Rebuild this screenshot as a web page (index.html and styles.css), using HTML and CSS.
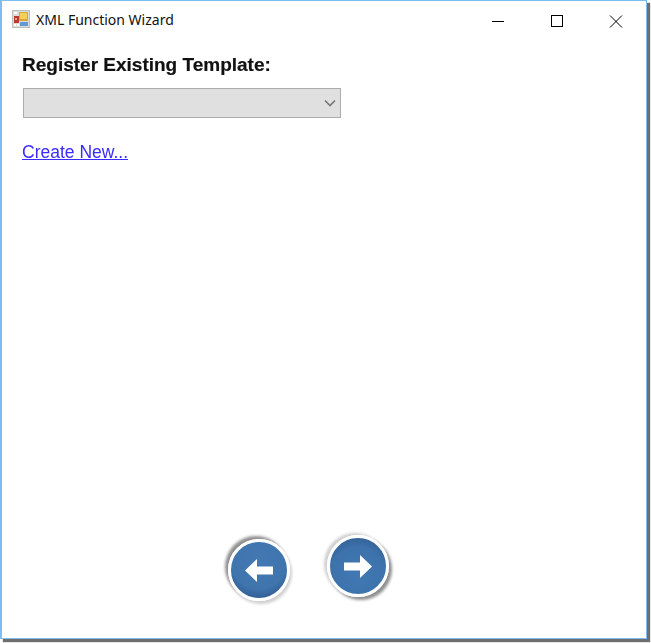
FILE: index.html
```html
<!DOCTYPE html>
<html lang="en">
<head>
<meta charset="utf-8">
<title>XML Function Wizard</title>
<link rel="stylesheet" href="styles.css">
</head>
<body>
<div class="window">
  <header class="titlebar">
    <svg class="app-icon" width="18" height="18" viewBox="0 0 18 18">
      <rect x="0" y="0" width="18" height="18" fill="#bdbdbd"/>
      <rect x="1" y="1" width="16" height="16" fill="#dcdcdc"/>
      <rect x="2" y="2" width="3" height="2" fill="#fff"/>
      <rect x="2" y="6" width="5" height="7" fill="#b8392f"/>
      <rect x="3" y="8" width="2" height="2" fill="#e9a09a"/>
      <rect x="7" y="2" width="9" height="9" fill="#d9a832"/>
      <rect x="8" y="3" width="7" height="6" fill="#f4cf5a"/>
      <rect x="8" y="12" width="8" height="4" fill="#5f9ad6"/>
      <rect x="2" y="14" width="2" height="2" fill="#fff"/>
      <rect x="5" y="14" width="2" height="2" fill="#fff"/>
    </svg>
    <span class="title">XML Function Wizard</span>
    <div class="controls">
      <svg class="ctl" width="58" height="30" viewBox="0 0 58 30"><path d="M23 20.5h12" stroke="#000" fill="none"/></svg>
      <svg class="ctl" width="60" height="30" viewBox="0 0 60 30"><rect x="24.5" y="14.500" width="11" height="11" stroke="#000" fill="none"/></svg>
      <svg class="ctl" width="58" height="30" viewBox="0 0 58 30"><path d="M23 14.500l12 12M35 14.500l-12 12" stroke="#000" fill="none"/></svg>
    </div>
  </header>
  <main class="content">
    <h1 class="label">Register Existing Template:</h1>
    <div class="combo">
      <svg width="12" height="8" viewBox="0 0 12 8" class="chevron"><path d="M1 1.500l5 5 5-5" stroke="#777" stroke-width="1.600" fill="none"/></svg>
    </div>
    <a class="link" href="#">Create New...</a>
  </main>
  <footer class="nav">
    <button class="round back" aria-label="Back">
      <svg width="28" height="23" viewBox="0 0 28 23"><path d="M0 11.500L12 0v7.500h16v8H12V23z" fill="#fff"/></svg>
    </button>
    <button class="round next" aria-label="Next">
      <svg width="28" height="23" viewBox="0 0 28 23"><path d="M28 11.500L16 0v7.500H0v8h16V23z" fill="#fff"/></svg>
    </button>
  </footer>
</div>
</body>
</html>
```
FILE: styles.css
```css
html, body { margin: 0; padding: 0; background: #fff; overflow: hidden; }
body { min-height: 100vh; }
.window {
  box-sizing: border-box;
  width: 647px;
  height: 639px;
  border: 1px solid #7dbdf3;
  border-left-width: 2px;
  box-shadow: 3px 3px 1px #6e6e6e;
  background: #fff;
  display: flex;
  flex-direction: column;
}
.titlebar { display: flex; align-items: center; height: 38px; padding-left: 10px; padding-right: 1px; flex: none; }
.app-icon { flex: none; margin-top: -3px; }
.title { font: 14px "Noto Sans", "Open Sans", sans-serif; color: #111; margin-left: 6px; margin-top: -1px; }
.controls { margin-left: auto; display: flex; align-self: flex-start; }
.ctl { display: block; }
.content { flex: 1; padding: 15px 0 0 20px; display: flex; flex-direction: column; align-items: flex-start; }
.label { margin: 0; font: bold 19px/21px "Liberation Sans", Arial, sans-serif; color: #111; filter: blur(0.3px); -webkit-text-stroke: 0.2px #111; }
.combo {
  box-sizing: border-box;
  width: 318px; height: 30px;
  margin: 13px 0 0 1px;
  background: #e0e0e0;
  border: 1px solid #adadad;
  display: flex; align-items: center; justify-content: flex-end;
  padding-right: 4px;
}
.link { margin-top: 24px; font: 17.500px/20px "Liberation Sans", Arial, sans-serif; color: #3a2bff; text-decoration: underline; filter: blur(0.25px); }
.nav { flex: none; display: flex; align-items: flex-start; gap: 37px; padding: 0 0 37px 226px; }
.round {
  box-sizing: border-box;
  width: 62px; height: 62px; padding: 0;
  border: 3px solid #fff; border-radius: 50%;
  display: flex; align-items: center; justify-content: center;
  filter: blur(0.6px);
}
.round.back {
  margin-top: 4px;
  background: radial-gradient(circle at 50% 35%, #4379b2 0%, #3f74ad 60%, #274a7c 100%);
  box-shadow: -3px -3px 3px #8f8f8f, 2px 3px 3px #d0d0d0;
}
.round.next {
  background: radial-gradient(circle at 50% 65%, #4179b4 0%, #3d72ab 60%, #2a5284 100%);
  box-shadow: 3px 3px 3px #8f8f8f, -3px -2px 3px #d0d0d0;
}
```
